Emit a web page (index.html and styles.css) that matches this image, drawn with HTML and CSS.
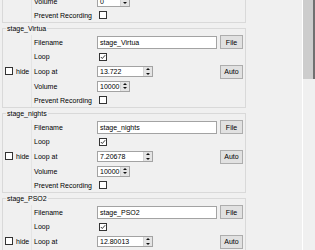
FILE: index.html
```html
<!DOCTYPE html>
<html lang="en">
<head>
    <meta charset="UTF-8">
    <meta name="viewport" content="width=device-width, initial-scale=1.0">
    <title>Stage Music</title>
    <link rel="stylesheet" href="styles.css">
</head>
<body>
    <div class="view">
        <div class="list">

            <!-- bottom of the entry above, scrolled partly out of view -->
            <fieldset class="group tail">
                <div class="side"></div>
                <div class="fields">
                    <label class="label">Volume</label>
                    <div class="spin short"><span class="value">0</span><span class="arrows"><i class="up"></i><i class="down"></i></span></div>
                    <label class="label">Prevent Recording</label>
                    <span class="check"></span>
                </div>
            </fieldset>

            <fieldset class="group">
                <legend>stage_Virtua</legend>
                <div class="side">
                    <span class="check"></span>
                    <span>hide</span>
                </div>
                <div class="fields">
                    <label class="label">Filename</label>
                    <div class="text">stage_Virtua</div>
                    <button class="btn">File</button>
                    <label class="label">Loop</label>
                    <span class="check checked"><svg viewBox="0 0 6 6"><path d="M0.8 3 L2.3 4.5 L5.2 1.2"/></svg></span>
                    <label class="label">Loop at</label>
                    <div class="spin"><span class="value">13.722</span><span class="arrows"><i class="up"></i><i class="down"></i></span></div>
                    <button class="btn">Auto</button>
                    <label class="label">Volume</label>
                    <div class="spin short"><span class="value">10000</span><span class="arrows"><i class="up"></i><i class="down"></i></span></div>
                    <label class="label">Prevent Recording</label>
                    <span class="check"></span>
                </div>
            </fieldset>

            <fieldset class="group">
                <legend>stage_nights</legend>
                <div class="side">
                    <span class="check"></span>
                    <span>hide</span>
                </div>
                <div class="fields">
                    <label class="label">Filename</label>
                    <div class="text">stage_nights</div>
                    <button class="btn">File</button>
                    <label class="label">Loop</label>
                    <span class="check checked"><svg viewBox="0 0 6 6"><path d="M0.8 3 L2.3 4.5 L5.2 1.2"/></svg></span>
                    <label class="label">Loop at</label>
                    <div class="spin"><span class="value">7.20678</span><span class="arrows"><i class="up"></i><i class="down"></i></span></div>
                    <button class="btn">Auto</button>
                    <label class="label">Volume</label>
                    <div class="spin short"><span class="value">10000</span><span class="arrows"><i class="up"></i><i class="down"></i></span></div>
                    <label class="label">Prevent Recording</label>
                    <span class="check"></span>
                </div>
            </fieldset>

            <fieldset class="group">
                <legend>stage_PSO2</legend>
                <div class="side">
                    <span class="check"></span>
                    <span>hide</span>
                </div>
                <div class="fields">
                    <label class="label">Filename</label>
                    <div class="text">stage_PSO2</div>
                    <button class="btn">File</button>
                    <label class="label">Loop</label>
                    <span class="check checked"><svg viewBox="0 0 6 6"><path d="M0.8 3 L2.3 4.5 L5.2 1.2"/></svg></span>
                    <label class="label">Loop at</label>
                    <div class="spin"><span class="value">12.80013</span><span class="arrows"><i class="up"></i><i class="down"></i></span></div>
                    <button class="btn">Auto</button>
                </div>
            </fieldset>

        </div>
        <div class="scrollbar">
            <div class="thumb"></div>
        </div>
    </div>
</body>
</html>
```

FILE: styles.css
```css
* {
    margin: 0;
    padding: 0;
    box-sizing: border-box;
}
body {
    background: #f0f0f0;
    font-family: "Liberation Sans", Arial, sans-serif;
    font-size: 7px;
    color: #000;
    overflow: hidden;
}
.view {
    display: flex;
    height: 250px;
    overflow: hidden;
}
.list {
    width: 302px;
    /* scrolled a bit into the list */
    margin-top: -6px;
}
.group {
    display: flex;
    width: 244px;
    margin: 0 0 1px 2px;
    padding-top: 2px;
    border: 1px solid #d9d9d9;
}
.group.tail {
    border-top: none;
    padding-top: 0;
}
.group legend {
    margin-left: 3px;
    padding: 0 1px;
    line-height: 9px;
}
.side {
    display: flex;
    align-items: center;
    gap: 3px;
    width: 29px;
    padding-left: 2px;
    border-right: 1px solid #e4e4e4;
}
.fields {
    display: grid;
    grid-template-columns: 60px 120px 23px;
    grid-template-rows: 14px 15px 15px 14px 14px;
    column-gap: 3px;
    align-items: center;
    padding-left: 2px;
}
.tail .fields {
    grid-template-rows: 14px 14px;
}
.label {
    grid-column: 1;
    white-space: nowrap;
}
.check {
    display: block;
    width: 8px;
    height: 8px;
    border: 1px solid #333;
    background: #fff;
}
.fields .check {
    margin-left: 2px;
}
.check svg {
    display: block;
    width: 6px;
    height: 6px;
    fill: none;
    stroke: #222;
    stroke-width: 0.9;
}
.text {
    width: 120px;
    height: 13px;
    padding: 0 2px;
    border: 1px solid #a3a3a3;
    background: #fff;
    line-height: 11px;
    white-space: nowrap;
}
.btn {
    grid-column: 3;
    height: 14px;
    border: 1px solid #adadad;
    background: #e1e1e1;
    font: inherit;
    color: #000;
}
.spin {
    display: flex;
    width: 56px;
    height: 11px;
    border: 1px solid #a3a3a3;
    background: #fff;
}
.spin.short {
    width: 33px;
}
.spin .value {
    flex: 1;
    padding-left: 2px;
    line-height: 9px;
    overflow: hidden;
    white-space: nowrap;
}
.arrows {
    display: flex;
    flex-direction: column;
    width: 9px;
    border-left: 1px solid #d4d4d4;
}
.arrows i {
    flex: 1;
    display: flex;
    align-items: center;
    justify-content: center;
    background: #e4e4e4;
}
.arrows i::before {
    content: "";
    border-left: 2px solid transparent;
    border-right: 2px solid transparent;
}
.arrows .up::before {
    border-bottom: 2px solid #111;
}
.arrows .down::before {
    border-top: 2px solid #111;
}
.scrollbar {
    width: 13px;
    border-left: 1px solid #fff;
    background: #f0f0f0;
}
.thumb {
    height: 79px;
    background: #cdcdcd;
    border-right: 2px solid #707070;
}
```
